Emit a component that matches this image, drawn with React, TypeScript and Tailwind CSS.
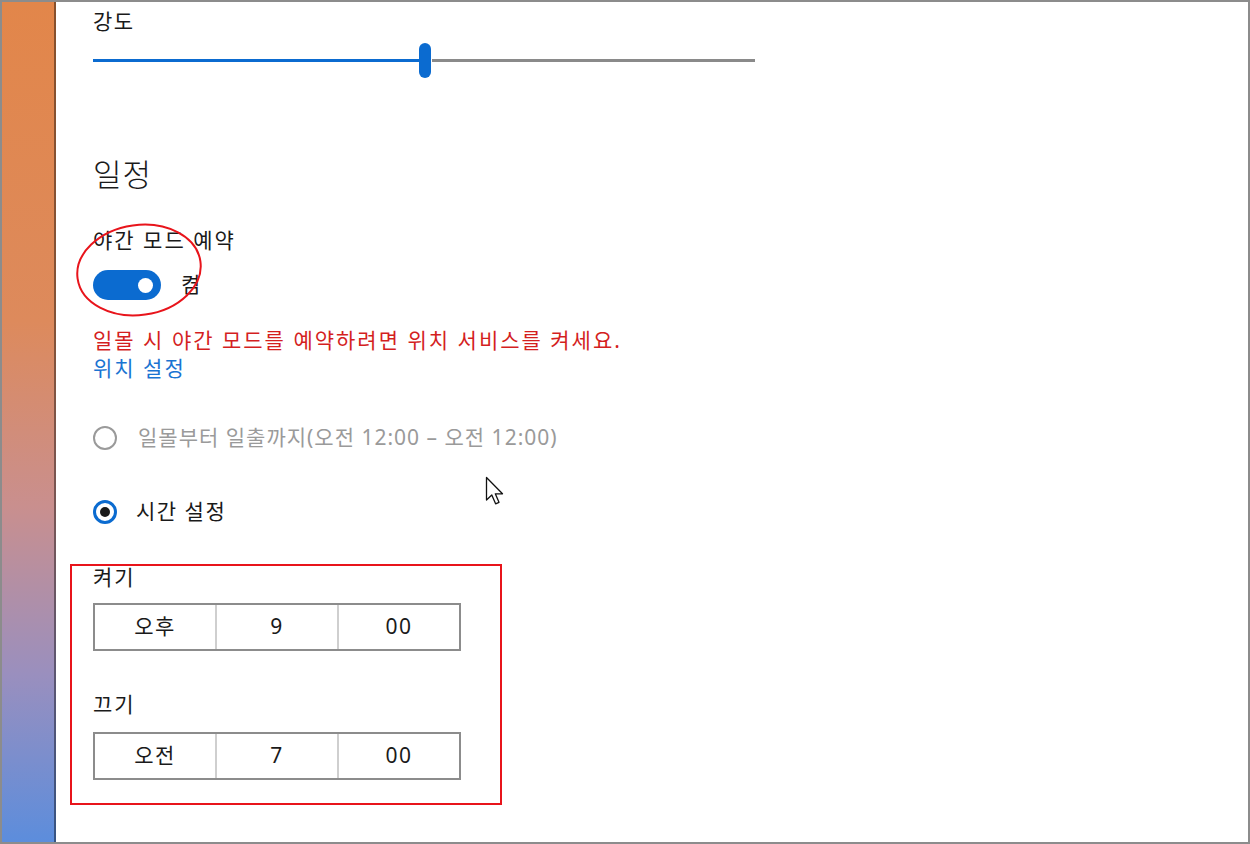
import React from "react";

function TimeBox({ parts }: { parts: string[] }) {
  return (
    <div className="flex h-[48px] w-[368px] border-2 border-[#8c8c8c] bg-white">
      {parts.map((p, i) => (
        <div
          key={i}
          className={
            "flex flex-1 items-center justify-center text-[21px] tracking-[1.5px] text-[#1a1a1a] " +
            (i > 0 ? "border-l-2 border-[#cfcfcf]" : "")
          }
        >
          {p}
        </div>
      ))}
    </div>
  );
}

export default function App() {
  return (
    <div
      className="relative flex h-[844px] w-[1250px] overflow-hidden border-2 border-[#8c8c8c] bg-white text-[#1a1a1a]"
      style={{ fontFamily: '"Noto Sans", "Noto Sans CJK KR", sans-serif' }}
    >
      <div className="w-[54px] shrink-0 border-r-2 border-black/40 bg-[linear-gradient(180deg,#e2864a_0%,#dd8a5c_38%,#c98f8e_60%,#9a8fbe_80%,#5c8ddc_100%)]" />

      <div className="flex flex-1 flex-col pl-[37px]">
        <div className="flex h-[40px] items-center text-[21px] tracking-[1.5px]">강도</div>

        <div className="relative h-[36px] w-[662px]">
          <div className="absolute left-0 top-[17px] h-[3px] w-[327px] bg-[#0b6bd0]" />
          <div className="absolute left-[339px] top-[17px] h-[3px] w-[323px] bg-[#8a8a8a]" />
          <div className="absolute left-[326px] top-[1px] h-[35px] w-[12px] rounded-full bg-[#0b6bd0]" />
        </div>

        <div className="mt-[71px] flex h-[50px] items-center text-[31px] font-light tracking-[1px]">일정</div>

        <div className="mt-[27px] flex h-[30px] items-center text-[21px] tracking-[2px]">야간 모드 예약</div>

        <div className="mt-[12px] flex h-[34px] items-center gap-[20px]">
          <div className="flex h-[30px] w-[68px] items-center justify-end rounded-full bg-[#0b6bd0] pr-[8px]">
            <div className="h-[15px] w-[15px] rounded-full bg-white" />
          </div>
          <span className="text-[21px]">켬</span>
        </div>

        <div className="mt-[25px] flex h-[28px] items-center text-[21px] tracking-[2px] text-[#d41f1f]">
          일몰 시 야간 모드를 예약하려면 위치 서비스를 켜세요.
        </div>
        <div className="flex h-[28px] items-center text-[21px] tracking-[2px] text-[#1a74d2]">위치 설정</div>

        <div className="mt-[38px] flex h-[34px] items-center gap-[21px] text-[21px] tracking-[1px] text-[#9a9a9a]">
          <div className="h-[24px] w-[24px] rounded-full border-2 border-[#9a9a9a]" />
          <span>일몰부터 일출까지(오전 12:00 – 오전 12:00)</span>
        </div>

        <div className="mt-[40px] flex h-[34px] items-center gap-[19px] text-[21px] tracking-[1.5px]">
          <div className="flex h-[24px] w-[24px] items-center justify-center rounded-full border-[3px] border-[#0b6bd0]">
            <div className="h-[10px] w-[10px] rounded-full bg-[#1a1a1a]" />
          </div>
          <span>시간 설정</span>
        </div>

        <div className="ml-[-23px] mt-[35px] w-[432px] border-2 border-[#e8141b] pb-[23px] pl-[21px]">
          <div className="flex h-[24px] items-center text-[21px] tracking-[2px]">켜기</div>
          <div className="mt-[13px]">
            <TimeBox parts={["오후", "9", "00"]} />
          </div>
          <div className="mt-[42px] flex h-[24px] items-center text-[21px] tracking-[2px]">끄기</div>
          <div className="mt-[15px]">
            <TimeBox parts={["오전", "7", "00"]} />
          </div>
        </div>
      </div>

      <svg className="pointer-events-none absolute left-[68px] top-[216px]" width="140" height="106" viewBox="0 0 140 106">
        <ellipse cx="69" cy="52" rx="62" ry="45" fill="none" stroke="#e8141b" strokeWidth="2" transform="rotate(-8 69 52)" />
      </svg>

      <svg className="pointer-events-none absolute left-[483px] top-[474px]" width="22" height="32" viewBox="0 0 22 32">
        <path
          d="M1.5 1.5 L1.5 24 L6.8 19 L10.6 27.8 L14 26.3 L10.3 17.8 L17.5 17.8 Z"
          fill="#fff"
          stroke="#111"
          strokeWidth="1.3"
          strokeLinejoin="round"
        />
      </svg>
    </div>
  );
}
